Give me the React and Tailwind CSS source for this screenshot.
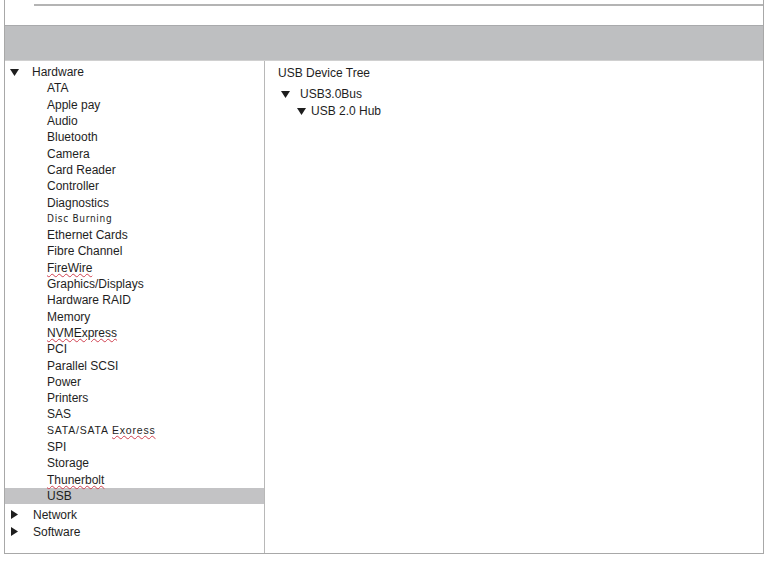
import React from "react";

const font = { fontFamily: '"Liberation Sans", Arial, sans-serif' };

const Down = ({ className = "" }) => (
  <svg width="9" height="7" viewBox="0 0 9 7" className={className}>
    <polygon points="0,0 9,0 4.5,7" fill="#1e1e1e" />
  </svg>
);
const Right = ({ className = "" }) => (
  <svg width="7" height="9" viewBox="0 0 7 9" className={className}>
    <polygon points="0,0 7,4.5 0,9" fill="#1e1e1e" />
  </svg>
);

const items = [
  { t: "ATA" },
  { t: "Apple pay" },
  { t: "Audio" },
  { t: "Bluetooth" },
  { t: "Camera" },
  { t: "Card Reader" },
  { t: "Controller" },
  { t: "Diagnostics" },
  { t: "Disc Burning", kind: "mono" },
  { t: "Ethernet Cards" },
  { t: "Fibre Channel" },
  { t: "FireWire", wavy: true },
  { t: "Graphics/Displays" },
  { t: "Hardware RAID" },
  { t: "Memory" },
  { t: "NVMExpress", wavy: true },
  { t: "PCI" },
  { t: "Parallel SCSI" },
  { t: "Power" },
  { t: "Printers" },
  { t: "SAS" },
  { t: "SATA", kind: "sata" },
  { t: "SPI" },
  { t: "Storage" },
  { t: "Thunerbolt", wavy: true },
  { t: "USB", selected: true },
];

const wavy = "underline decoration-wavy decoration-[#d04050] decoration-[0.8px] underline-offset-[1px]";

function Item({ it }) {
  let content;
  if (it.kind === "mono") {
    content = (
      <span className="text-[10px] tracking-[0.7px]" style={{ fontFamily: '"DejaVu Sans Condensed", "DejaVu Sans", sans-serif' }}>
        {it.t}
      </span>
    );
  } else if (it.kind === "sata") {
    content = (
      <span className="text-[10.5px] tracking-[0.8px]">
        SATA/SATA <span className={wavy}>Exoress</span>
      </span>
    );
  } else {
    content = <span className={it.wavy ? wavy : ""}>{it.t}</span>;
  }
  return (
    <div
      className={
        "h-[16.3px] flex items-center pl-[42px] " +
        (it.selected ? "bg-[#c3c3c5]" : "")
      }
    >
      {content}
    </div>
  );
}

export default function App() {
  return (
    <div className="w-[770px] h-[562px] bg-white text-[12px] text-[#1e1e1e] overflow-hidden" style={font}>
      <div className="ml-[4px] w-[760px] h-[554px] border-l border-r border-b border-[#a8a8a8] flex flex-col">
        <div className="h-[25px] shrink-0 pt-[4px]">
          <div className="ml-[29px] border-t-2 border-[#b4b4b4]" />
        </div>
        <div className="h-[36px] shrink-0 bg-[#bebfc1] border-t border-[#a9aaac] border-b border-b-[#d0d0d0]" />
        <div className="flex flex-1">
          <div className="w-[260px] shrink-0 border-r border-[#b8b8b8] pt-[3px]">
            <div className="h-[16.3px] flex items-center">
              <Down className="ml-[5px]" />
              <span className="ml-[13px]">Hardware</span>
            </div>
            {items.map((it) => (
              <Item key={it.t} it={it} />
            ))}
            <div className="h-[17px] mt-[2px] flex items-center">
              <Right className="ml-[6px]" />
              <span className="ml-[15px]">Network</span>
            </div>
            <div className="h-[17px] flex items-center">
              <Right className="ml-[6px]" />
              <span className="ml-[15px]">Software</span>
            </div>
          </div>
          <div className="flex-1 pt-[4px] pl-[13px]">
            <div className="h-[15px] flex items-center">USB Device Tree</div>
            <div className="h-[16px] mt-[6px] flex items-center">
              <Down className="ml-[3px]" />
              <span className="ml-[10px]">USB3.0Bus</span>
            </div>
            <div className="h-[16px] mt-[1px] flex items-center">
              <Down className="ml-[19px]" />
              <span className="ml-[5px]">USB 2.0 Hub</span>
            </div>
          </div>
        </div>
      </div>
    </div>
  );
}
